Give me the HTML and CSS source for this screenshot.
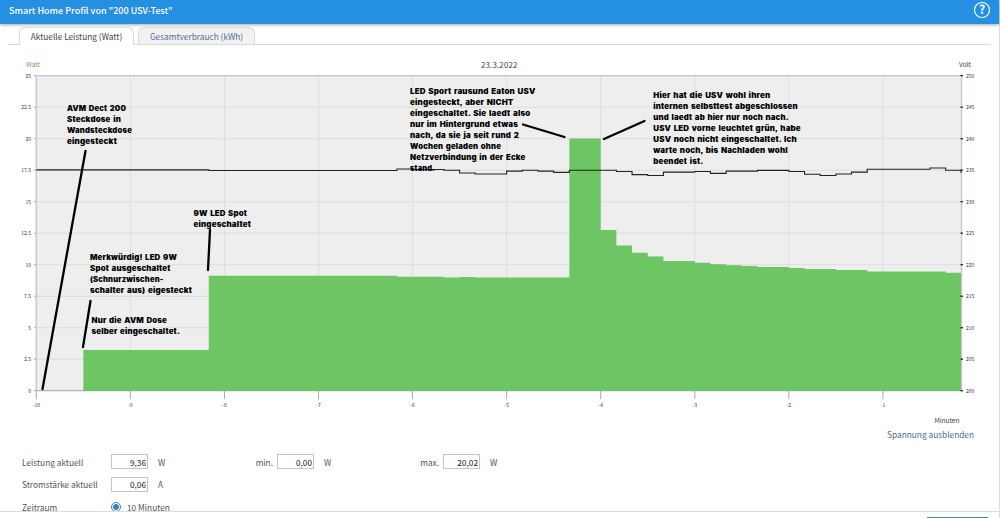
FILE: index.html
```html
<!DOCTYPE html>
<html lang="de">
<head>
    <meta charset="UTF-8">
    <meta name="viewport" content="width=device-width, initial-scale=1.0">
    <title>Smart Home Profil</title>
    <link rel="stylesheet" href="styles.css">
</head>
<body>
    <div class="window">
        <header class="titlebar">
            <h1>Smart Home Profil von "200 USV-Test"</h1>
            <svg class="help" viewBox="0 0 18 18" width="18" height="18">
                <circle cx="9" cy="9" r="7.5"/>
                <text x="9" y="13.2">?</text>
            </svg>
        </header>

        <nav class="tabs">
            <div class="tab active"><span>Aktuelle Leistung (Watt)</span></div>
            <div class="tab"><span>Gesamtverbrauch (kWh)</span></div>
        </nav>

        <main class="content">
            <svg id="chart" class="chart" width="992" height="380" viewBox="0 50 992 380"></svg>

            <div class="toggle"><a href="#">Spannung ausblenden</a></div>

            <div class="row">
                <label class="name">Leistung aktuell</label>
                <input type="text" value="9,36"><span class="unit">W</span>
                <label class="min">min.</label>
                <input type="text" value="0,00"><span class="unit">W</span>
                <label class="max">max.</label>
                <input type="text" value="20,02"><span class="unit">W</span>
            </div>
            <div class="row">
                <label class="name">Stromstärke aktuell</label>
                <input type="text" value="0,06"><span class="unit">A</span>
            </div>
            <div class="row">
                <label class="name">Zeitraum</label>
                <span class="radio"></span><label>10 Minuten</label>
            </div>
        </main>

        <footer class="buttons">
            <div class="button"></div>
        </footer>
    </div>
    <script src="chart.js"></script>
</body>
</html>
```
FILE: chart.js
```js
const LEFT = 36.3, RIGHT = 961, TOP = 75.7, BOTTOM = 390.7;
const MINUTE = 94.07;
const chart = document.getElementById('chart');

// [first 10s slot, watt]
const power = [
    [3, 3.23], [11, 9.12], [23, 9.05], [26, 8.98], [27, 9.02], [28, 8.98], [34, 20.02],
    [36, 12.75], [37, 11.52], [38, 10.95], [39, 10.65], [40, 10.3], [42, 10.16],
    [43, 10.04], [44, 9.96], [45, 9.89], [46, 9.81], [48, 9.73], [49, 9.65],
    [51, 9.57], [53, 9.46], [58, 9.36]
];

// [first 10s slot, volt]
const voltage = [
    [0, 235.05], [11, 234.95], [23, 235.2], [24, 235.1], [26, 235], [27, 234.55], [28, 234.4],
    [30, 234.85], [31, 235], [32, 234.85], [33, 234.65], [34, 235], [37, 234.8], [38, 234.3],
    [39, 234.15], [40, 234.7], [42, 234.8], [43, 234.5], [44, 234.85], [46, 234.98], [48, 234.8],
    [49, 234.35], [50, 234.15], [51, 234.4], [52, 234.7], [53, 235.15], [57, 235.35], [58, 235]
];

const notes = [
    { x: 67, y: 111.2, lines: [['AVM Dect 200', 59], ['Steckdose in', 54], ['Wandsteckdose', 65], ['eingesteckt', 50]] },
    { x: 193.5, y: 216.2, lines: [['9W LED Spot', 53.5], ['eingeschaltet', 57.5]] },
    { x: 90, y: 260.2, lines: [['Merkwürdig! LED 9W', 87], ['Spot ausgeschaltet', 80.5], ['(Schnurzwischen-', 73.5], ['schalter aus) eigesteckt', 102]] },
    { x: 91.5, y: 322.6, lines: [['Nur die AVM Dose', 75.5], ['selber eingeschaltet.', 88.5]] },
    { x: 410, y: 94.2, lines: [['LED Sport rausund Eaton USV', 125.5], ['eingesteckt, aber NICHT', 103.5], ['eingeschaltet. Sie laedt also', 120.5], ['nur im Hintergrund etwas', 108], ['nach, da sie ja seit rund 2', 109], ['Wochen geladen ohne', 91], ['Netzverbindung in der Ecke', 115.5], ['stand.', 25]] },
    { x: 653.3, y: 97.8, lines: [['Hier hat die USV wohl ihren', 117], ['internen selbsttest abgeschlossen', 144.5], ['und laedt ab hier nur noch nach.', 135.5], ['USV LED vorne leuchtet grün, habe', 147.5], ['USV noch nicht eingeschaltet. Ich', 143.5], ['warte noch, bis Nachladen wohl', 134.5], ['beendet ist.', 50]] }
];

const pointers = [
    [85.5, 151, 42.5, 389], [90.5, 301, 83, 347], [210, 230, 208, 270],
    [523, 124.5, 564.5, 137], [644.5, 121, 604, 139]
];

function add(tag, attrs, text) {
    const el = document.createElementNS('http://www.w3.org/2000/svg', tag);
    for (const key in attrs) el.setAttribute(key, attrs[key]);
    if (text !== undefined) el.textContent = text;
    chart.appendChild(el);
}

function slotX(slot) {
    return Math.min(LEFT + slot * MINUTE / 6, RIGHT);
}

function steps(data, toY) {
    return data.map(([slot, value], i) => {
        const end = i + 1 < data.length ? slotX(data[i + 1][0]) : RIGHT;
        return `${slotX(slot)},${toY(value)} ${end},${toY(value)}`;
    }).join(' ');
}

function line(cls, x1, y1, x2, y2) {
    add('line', { class: cls, x1, y1, x2, y2 });
}

add('rect', { class: 'plot', x: LEFT, y: TOP, width: RIGHT - LEFT, height: BOTTOM - TOP });
for (let i = 0; i <= 10; i++) {
    const y = TOP + i * 31.5;
    line('grid', LEFT, y, RIGHT, y);
    line('tick', LEFT - 2.5, y, LEFT, y);
    add('text', { class: 'scale left', x: 31, y: y + 2 }, 25 - i * 2.5);
    add('text', { class: 'scale', x: 966, y: y + 2 }, 250 - i * 5);
}
for (let i = 0; i < 10; i++) {
    const x = LEFT + i * MINUTE;
    line('grid', x, TOP, x, BOTTOM);
    line('tick', x, BOTTOM, x, BOTTOM + 8.5);
    add('text', { class: 'scale center', x, y: 407.3 }, i - 10);
}
line('axis', LEFT, TOP, RIGHT, TOP);
line('axis', LEFT, TOP, LEFT, BOTTOM);
line('axis', RIGHT + 0.5, TOP, RIGHT + 0.5, BOTTOM);
line('zero', LEFT, BOTTOM, RIGHT, BOTTOM);

add('polygon', {
    class: 'power',
    points: `${slotX(3)},391 ${steps(power, v => BOTTOM - v * 12.6)} ${RIGHT},391`
});
add('polyline', { class: 'voltage', points: steps(voltage, v => BOTTOM - (v - 200) * 6.3) + ` ${RIGHT},173` });
for (let i = 0; i <= 10; i++) {
    line('dot', RIGHT - 0.5, TOP + i * 31.5, RIGHT + 2, TOP + i * 31.5);
}

add('text', { class: 'caption watt', x: 26, y: 67 }, 'Watt');
add('text', { class: 'caption', x: 959, y: 67 }, 'Volt');
add('text', { class: 'caption', x: 934.5, y: 422.5, textLength: 25 }, 'Minuten');
add('text', { class: 'date', x: 481, y: 67.5, textLength: 36.5 }, '23.3.2022');

notes.forEach(note => note.lines.forEach(([text, width], i) => {
    add('text', { class: 'note', x: note.x, y: note.y + i * 10.95, textLength: width, lengthAdjust: 'spacingAndGlyphs' }, text);
}));
pointers.forEach(p => line('pointer', ...p));
```
FILE: styles.css
```css
* {
    box-sizing: border-box;
}
body {
    margin: 0;
    background: #fff;
    color: #555;
    font-family: "Noto Sans CJK SC", "Open Sans", sans-serif;
    font-size: 8.3px;
    overflow: hidden;
}
.window {
    height: 518px;
    display: flex;
    flex-direction: column;
    border-right: 1px solid #deded8;
}
.titlebar {
    flex: none;
    height: 24px;
    padding: 0 8px 4px 9px;
    display: flex;
    align-items: center;
    justify-content: space-between;
    background: #258fe1;
    color: #fff;
    box-shadow: 0 1px 3px rgba(0,0,0,0.35);
}
.titlebar h1 {
    margin: 0;
    font-size: 9px;
    font-weight: 500;
}
.help circle {
    fill: none;
    stroke: #fff;
    stroke-width: 1.2;
}
.help text {
    fill: #fff;
    font-size: 12px;
    font-weight: 700;
    text-anchor: middle;
}
.tabs {
    flex: none;
    height: 21px;
    margin: 0 8px;
    padding: 3px 11px 0;
    display: flex;
    gap: 4px;
    border-bottom: 1px solid #d5dade;
}
.tab {
    height: 17px;
    width: 117px;
    line-height: 16px;
    text-align: center;
    white-space: nowrap;
    border: 1px solid #d5dade;
    border-bottom: 0;
    border-radius: 6px 6px 0 0;
    background: #f3f2f0;
    color: #4c6ea4;
}
.tab.active {
    height: 18px;
    width: 115px;
    background: #fff;
    color: #444;
}
.content {
    flex: 1;
    min-height: 0;
    padding-top: 5px;
}
.chart {
    display: block;
}
.toggle {
    height: 22.5px;
    margin-top: -2px;
    padding-right: 25px;
    text-align: right;
    line-height: 12px;
}
.toggle a {
    color: #466c98;
    text-decoration: none;
}
.row {
    height: 22.6px;
    padding-left: 22px;
    display: flex;
    align-items: center;
    line-height: 10px;
}
.row .name {
    width: 89px;
}
.row .min {
    width: 109px;
    text-align: right;
    padding-right: 4px;
}
.row .max {
    width: 109px;
    text-align: right;
    padding-right: 4px;
}
.row input {
    width: 37px;
    height: 15px;
    padding: 0 1px;
    border: 1px solid #c2c6c2;
    text-align: right;
    font: inherit;
    color: #222;
}
.unit {
    width: 20px;
    padding-left: 10px;
}
.radio {
    width: 10px;
    height: 10px;
    margin-right: 6px;
    border: 1px solid #3183c4;
    border-radius: 50%;
    background: radial-gradient(circle, #3183c4 2.6px, #fff 3.2px);
}
.buttons {
    flex: none;
    height: 7px;
    padding: 5px 11px 0 0;
    display: flex;
    justify-content: flex-end;
    border-top: 1px solid #deded8;
}
.button {
    width: 61px;
    background: #4389a5;
}
.plot {
    fill: #eee;
}
.grid {
    stroke: #d8dada;
    stroke-width: 0.8;
}
.tick {
    stroke: #8c9694;
    stroke-width: 0.8;
}
.axis {
    stroke: #c2c9c9;
    stroke-width: 1.3;
}
.zero {
    stroke: #96b994;
}
.dot {
    stroke: #222;
    stroke-width: 1.3;
}
.power {
    fill: #6dc563;
}
.voltage {
    fill: none;
    stroke: #222;
    stroke-width: 1.1;
}
.scale {
    font-size: 5px;
    fill: #333;
}
.left {
    text-anchor: end;
}
.center {
    text-anchor: middle;
}
.caption {
    font-size: 6.6px;
    fill: #444;
}
.watt {
    fill: #6fa650;
}
.date {
    font-size: 8px;
    fill: #444;
}
.note {
    font-family: Inter, "Liberation Sans", Arial, sans-serif;
    font-size: 7.4px;
    font-weight: 900;
    letter-spacing: 0.15px;
    word-spacing: 0.8px;
    fill: #000;
}
.pointer {
    stroke: #000;
    stroke-width: 2.3;
    stroke-linecap: round;
}
```
